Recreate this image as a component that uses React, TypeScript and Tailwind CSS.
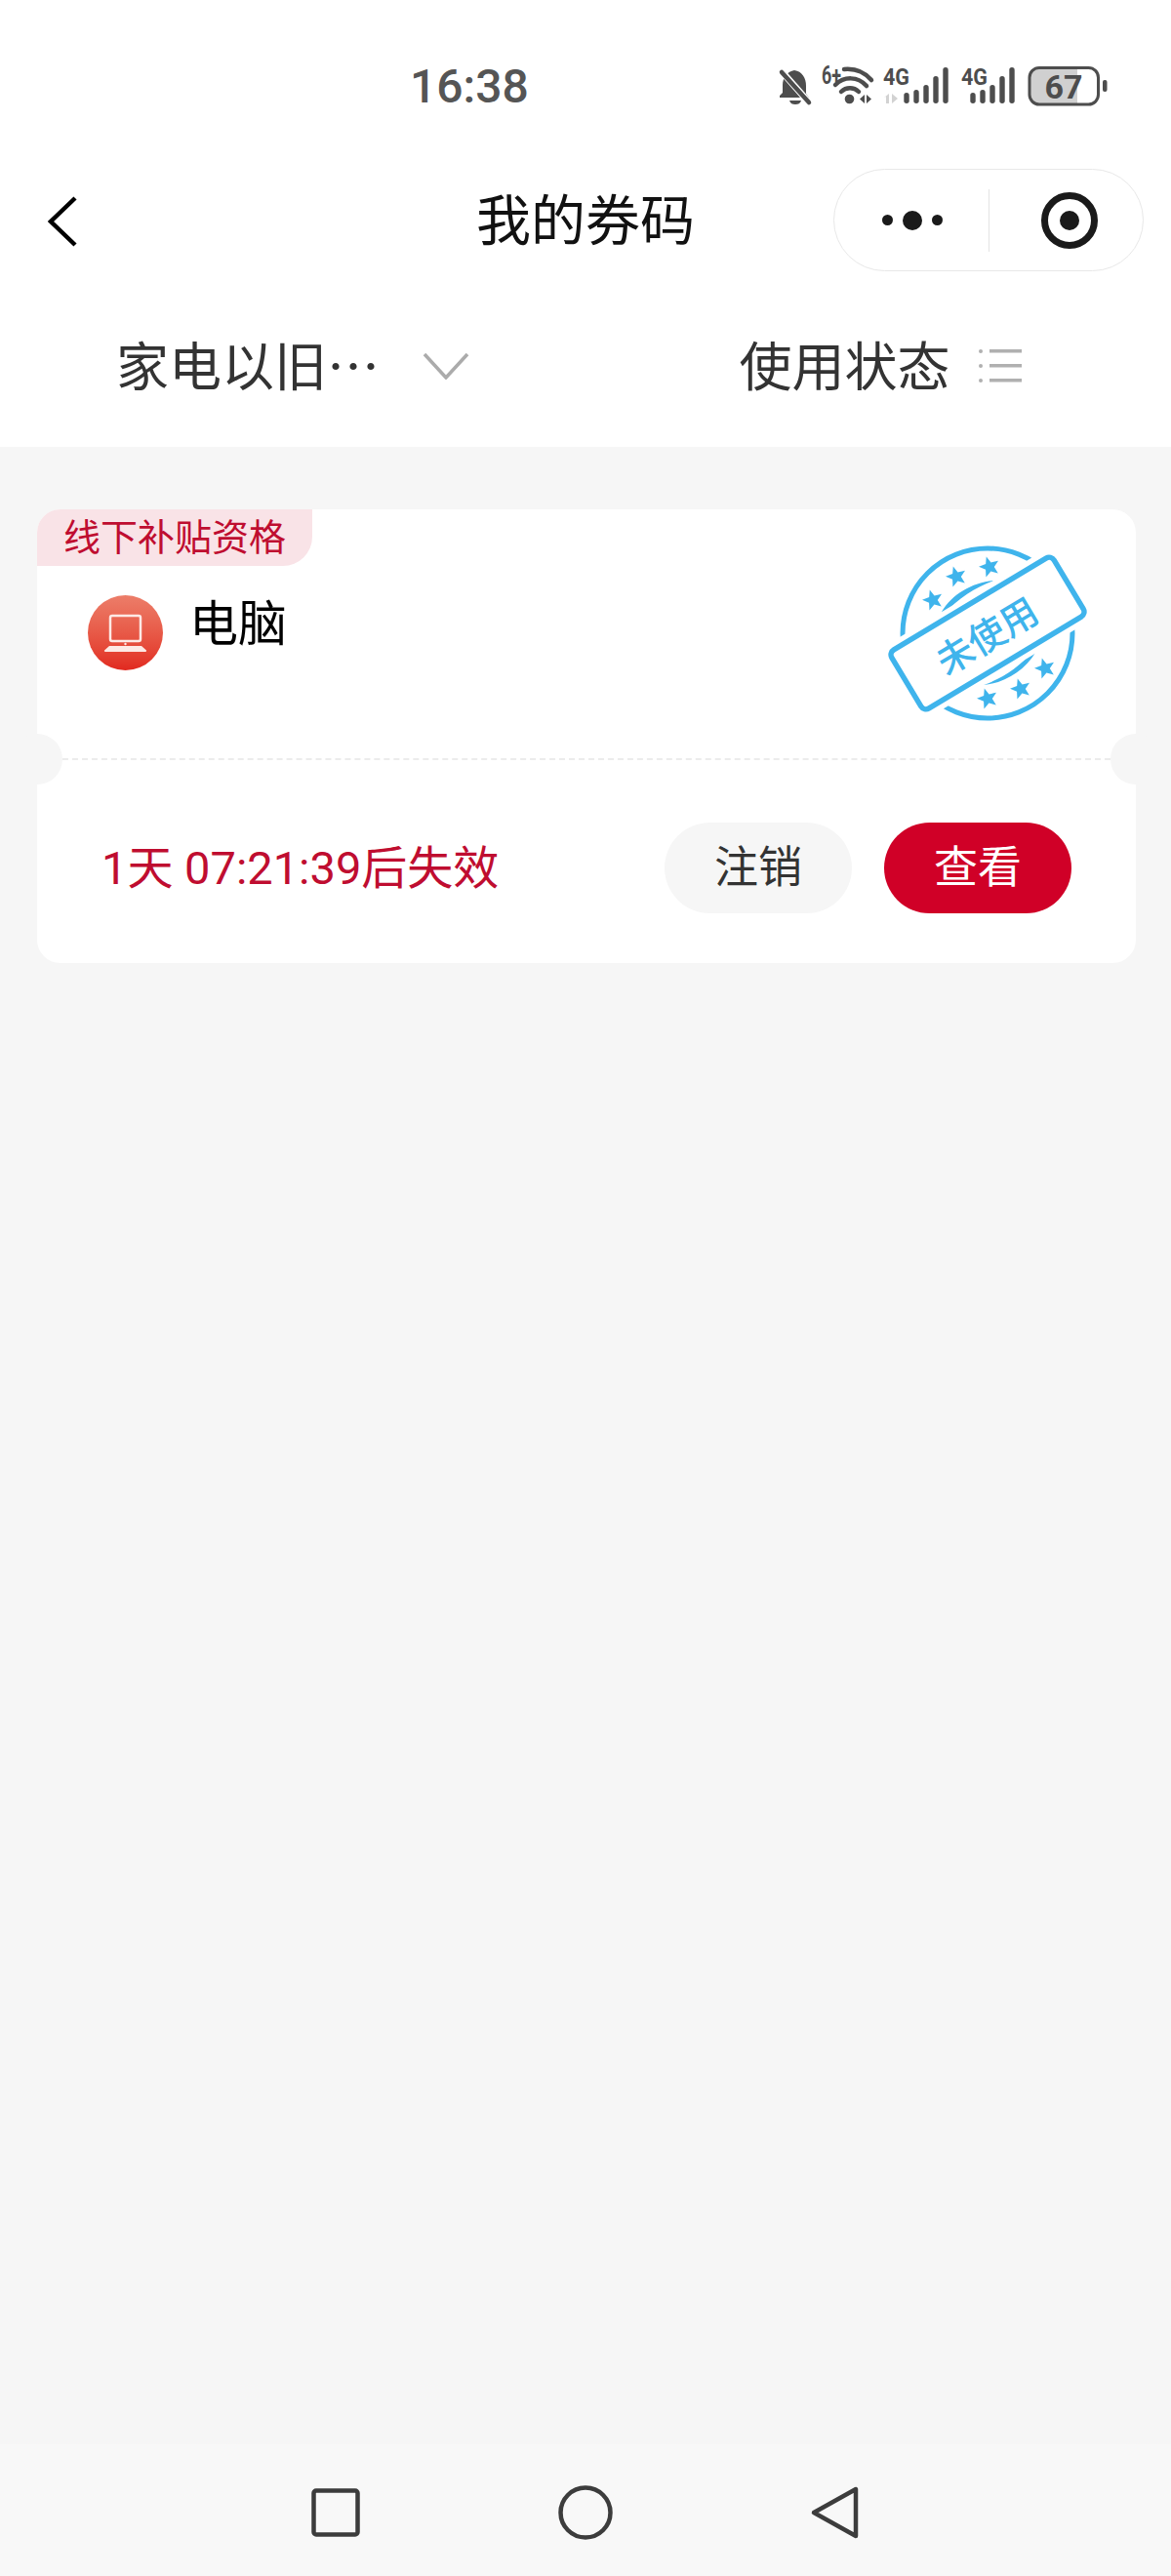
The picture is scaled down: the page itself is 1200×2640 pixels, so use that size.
const bars = [
  [95, 11],
  [92, 14],
  [87, 19],
  [78, 28],
  [69, 37],
];

function SignalBars({ x }: { x: number }) {
  return (
    <g fill="#4d4d4d">
      {bars.map(([y, h], i) => (
        <rect key={i} x={x + i * 10 - 2.7} y={y} width={5.4} height={h} rx={2.7} />
      ))}
    </g>
  );
}

// bell, wifi, two SIM signals and the battery share one coordinate space
function StatusIcons() {
  return (
    <svg viewBox="790 60 350 60" className="h-[60px] w-[350px] shrink-0">
      <path d="M814 72c8 1 12 8 12 16v8l3 4H799v-2l3-3v-8c0-7 5-14 12-15z" fill="#4d4d4d" />
      <path d="M809 103h12c-1 3-3 4-6 4s-5-1-6-4z" fill="#4d4d4d" />
      <path d="M800 72l29 33" stroke="#fff" strokeWidth="7" />
      <path d="M801 74l28 31" stroke="#4d4d4d" strokeWidth="4.500" strokeLinecap="round" />

      <text x="842" y="86" fontSize="25" fontWeight="700" fill="#4d4d4d" fontFamily="Roboto, sans-serif" textLength="20" lengthAdjust="spacingAndGlyphs">6+</text>
      <path d="M865 71c11-1 21 3 28 11" fill="none" stroke="#4d4d4d" strokeWidth="4.500" strokeLinecap="round" />
      <path d="M856 87c9-9 23-9 32 1" fill="none" stroke="#4d4d4d" strokeWidth="4.500" strokeLinecap="round" />
      <path d="M862 94c5-5 13-5 18 0" fill="none" stroke="#4d4d4d" strokeWidth="4.500" strokeLinecap="round" />
      <circle cx="870.500" cy="101.500" r="4.800" fill="#4d4d4d" />
      <path d="M886 97v9l-5-4.500zM888 97v9l5-4.500z" fill="#4d4d4d" />

      <text x="905" y="87" fontSize="24" fontWeight="700" fill="#4d4d4d" fontFamily="Roboto, sans-serif" textLength="27" lengthAdjust="spacingAndGlyphs">4G</text>
      <path d="M911 96v10h-3v-7l-2 1zM914 96l6 5-6 5z" fill="#d2d2d2" />
      <SignalBars x={929} />

      <text x="985" y="87" fontSize="24" fontWeight="700" fill="#4d4d4d" fontFamily="Roboto, sans-serif" textLength="27" lengthAdjust="spacingAndGlyphs">4G</text>
      <SignalBars x={997} />

      <path d="M1064 69.500h40v37h-40a9 9 0 0 1-9-9v-19a9 9 0 0 1 9-9z" fill="#d0d0d0" />
      <rect x="1055" y="69.500" width="70.500" height="37.500" rx="10" fill="none" stroke="#4d4d4d" strokeWidth="3" />
      <text x="1090" y="101" fontSize="34" fontWeight="700" fill="#4d4d4d" textAnchor="middle" fontFamily="Roboto, sans-serif">67</text>
      <rect x="1130" y="82" width="4.500" height="12" rx="2" fill="#4d4d4d" />
    </svg>
  );
}

function Capsule() {
  return (
    <div className="absolute right-[28px] top-0 flex h-[105px] w-[318px] items-center rounded-full border border-[#e8e8e8] bg-white">
      <div className="flex w-[158px] items-center justify-center gap-[10px] pl-[2px]">
        <span className="h-[11px] w-[11px] rounded-full bg-[#1a1a1a]" />
        <span className="h-[20px] w-[20px] rounded-full bg-[#1a1a1a]" />
        <span className="h-[11px] w-[11px] rounded-full bg-[#1a1a1a]" />
      </div>
      <div className="h-[64px] w-px bg-[#e4e4e4]" />
      <div className="flex flex-1 items-center justify-center pl-[7px]">
        <div className="flex h-[58px] w-[58px] items-center justify-center rounded-full border-[7px] border-[#1a1a1a]">
          <span className="h-[20px] w-[20px] rounded-full bg-[#1a1a1a]" />
        </div>
      </div>
    </div>
  );
}

function LaptopBadge() {
  return (
    <div className="flex h-[77px] w-[77px] shrink-0 items-center justify-center rounded-full bg-gradient-to-b from-[#ec7d69] to-[#e1281f]">
      <svg viewBox="0 0 77 77" className="h-[77px] w-[77px]">
        <rect x="23" y="21" width="31" height="26" rx="2" fill="none" stroke="#fde9e5" strokeWidth="2.500" />
        <circle cx="38.500" cy="50" r="1.200" fill="#fde9e5" />
        <path d="M22 52h33l5 4.500a1 1 0 0 1-1 1.500H18a1 1 0 0 1-1-1.500z" fill="#fde9e5" />
      </svg>
    </div>
  );
}

const stars = [
  [-56, -34],
  [-32, -58],
  [2, -68],
  [0, 67],
  [34, 57],
  [59, 36],
];

function starPoints(cx: number, cy: number) {
  const pts: string[] = [];
  for (let i = 0; i < 10; i++) {
    const r = i % 2 === 0 ? 11 : 4.800;
    const a = (Math.PI / 5) * i - Math.PI / 2 - 0.3;
    pts.push(`${cx + r * Math.cos(a)},${cy + r * Math.sin(a)}`);
  }
  return pts.join(' ');
}

// round stamp with a tilted ribbon across it
function UnusedStamp() {
  const blue = '#3fb4ec';
  return (
    <svg viewBox="-120 -110 240 220" className="absolute left-[854px] top-[17px] h-[220px] w-[240px]">
      <circle cx="0" cy="0" r="87" fill="none" stroke={blue} strokeWidth="5" />
      {stars.map(([x, y], i) => (
        <polygon key={i} points={starPoints(x, y)} fill={blue} />
      ))}
      <path d="M-47-22C-36-40-16-52 7-54C-12-47-30-36-44-20z" fill={blue} />
      <path d="M49 20C38 38 18 51-4 53C15 46 33 35 46 18z" fill={blue} />
      <g transform="rotate(-31)">
        <rect x="-104" y="-43" width="208" height="86" fill="#fff" />
        <rect x="-97" y="-35" width="194" height="70" rx="6" fill="#fff" stroke={blue} strokeWidth="5.500" />
        <text x="-2" y="16" textAnchor="middle" fontSize="38" fontWeight="500" fill={blue} fontFamily="'Noto Sans CJK SC', sans-serif">未使用</text>
      </g>
    </svg>
  );
}

function CouponCard() {
  return (
    <div className="relative ml-[38px] mr-[36px] mt-[64px] h-[465px] rounded-[24px] bg-white">
      <div className="h-[255px] overflow-hidden rounded-t-[24px]">
        <div className="flex h-[58px] w-[282px] items-center justify-center rounded-br-[30px] bg-[#f9e3e7] text-[38px] leading-none text-[#bf0d30]">
          线下补贴资格
        </div>
        <div className="flex items-start gap-[27px] pl-[52px] pt-[30px]">
          <LaptopBadge />
          <span className="text-[50px] leading-[60px] text-black">电脑</span>
        </div>
      </div>
      <UnusedStamp />
      <div className="mx-[26px] border-t-2 border-dashed border-[#ececec]" />
      <span className="absolute -left-[26px] top-[230px] h-[52px] w-[52px] rounded-full bg-[#f6f6f6]" />
      <span className="absolute -right-[26px] top-[230px] h-[52px] w-[52px] rounded-full bg-[#f6f6f6]" />
      <div className="flex items-center justify-between pl-[66px] pr-[66px] pt-[64px]">
        <span className="text-[47px] leading-[93px] text-[#bf0d30]">1天 07:21:39后失效</span>
        <div className="flex gap-[33px]">
          <button className="h-[93px] w-[192px] rounded-full bg-[#f6f6f6] text-[45px] text-[#333]">注销</button>
          <button className="h-[93px] w-[192px] rounded-full bg-[#d00027] text-[45px] text-white">查看</button>
        </div>
      </div>
    </div>
  );
}

export default function App() {
  return (
    <div
      lang="zh-CN"
      className="flex h-[2640px] w-[1200px] flex-col bg-[#f6f6f6] font-['Roboto','Noto_Sans_CJK_SC',sans-serif]"
    >
      <header className="h-[458px] bg-white">
        <div className="flex h-[173px] items-start justify-between pl-[420px] pr-[60px] pt-[60px]">
          <span className="text-[48px] font-medium leading-[58px] text-[#555]">16:38</span>
          <StatusIcons />
        </div>

        <div className="relative flex h-[105px] items-center justify-center">
          <svg viewBox="0 0 32 52" className="absolute left-[48px] top-[28px] h-[52px] w-[32px]">
            <path d="M29 2L4 26l25 24" fill="none" stroke="#000" strokeWidth="4.500" />
          </svg>
          <h1 className="pt-[3px] text-[56px] font-normal leading-none text-[#111]">我的券码</h1>
          <Capsule />
        </div>

        <div className="grid h-[180px] grid-cols-2 pt-[8px] font-['Noto_Sans_CJK_SC',sans-serif] text-[54px] text-[#333]">
          <div className="flex items-center justify-center gap-[44px]">
            <span>家电以旧…</span>
            <svg viewBox="0 0 48 28" className="mt-[6px] h-[28px] w-[48px]">
              <path d="M2 2l22 24L46 2" fill="none" stroke="#ababab" strokeWidth="3.500" />
            </svg>
          </div>
          <div className="flex items-center justify-center gap-[28px] pl-[5px]">
            <span>使用状态</span>
            <svg viewBox="0 0 46 36" className="mt-[6px] h-[36px] w-[46px]">
              <g fill="#b0b0b0">
                <rect x="1" y="1" width="4" height="4" rx="2" />
                <rect x="12" y="1" width="33" height="3.500" />
                <rect x="1" y="16" width="4" height="4" rx="2" />
                <rect x="12" y="16" width="33" height="3.500" />
                <rect x="1" y="31" width="4" height="4" rx="2" />
                <rect x="12" y="31" width="33" height="3.500" />
              </g>
            </svg>
          </div>
        </div>
      </header>

      <main className="flex-1">
        <CouponCard />
      </main>

      <nav className="flex h-[135px] items-center justify-center gap-[196px] bg-[#f8f8f8] pt-[4px]">
        <svg viewBox="0 0 60 60" className="h-[60px] w-[60px]">
          <rect x="7.500" y="7.500" width="45" height="45" rx="2.500" fill="none" stroke="#3c3c3c" strokeWidth="4.500" />
        </svg>
        <svg viewBox="0 0 60 60" className="h-[60px] w-[60px]">
          <circle cx="30" cy="30" r="25.500" fill="none" stroke="#3c3c3c" strokeWidth="4.500" />
        </svg>
        <svg viewBox="0 0 60 60" className="h-[60px] w-[60px]">
          <path d="M51 6v48L8 30z" fill="none" stroke="#3c3c3c" strokeWidth="4.500" strokeLinejoin="round" />
        </svg>
      </nav>
    </div>
  );
}
